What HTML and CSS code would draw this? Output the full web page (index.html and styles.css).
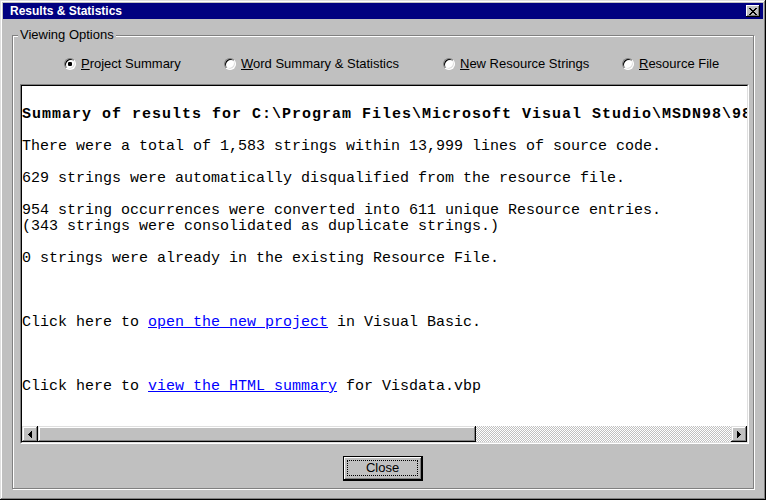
FILE: index.html
```html
<!DOCTYPE html>
<html>
<head>
<meta charset="utf-8">
<link rel="stylesheet" href="styles.css">
</head>
<body>
<div class="window">
  <div class="titlebar">
    <span class="title">Results &amp; Statistics</span>
    <span class="tbtn"><svg width="8" height="7" viewBox="0 0 8 7" shape-rendering="crispEdges"><path d="M0 0h2v1h-2zM6 0h2v1h-2zM1 1h2v1h-2zM5 1h2v1h-2zM2 2h4v1h-4zM3 3h2v1h-2zM2 4h4v1h-4zM1 5h2v1h-2zM5 5h2v1h-2zM0 6h2v1h-2zM6 6h2v1h-2z" fill="#000"/></svg></span>
  </div>
  <div class="body">
    <div class="group">
      <span class="legend">Viewing Options</span>
      <div class="radios">
        <label class="radio"><span class="circle checked"></span><span><u>P</u>roject Summary</span></label>
        <label class="radio"><span class="circle"></span><span><u>W</u>ord Summary &amp; Statistics</span></label>
        <label class="radio"><span class="circle"></span><span><u>N</u>ew Resource Strings</span></label>
        <label class="radio"><span class="circle"></span><span><u>R</u>esource File</span></label>
      </div>
      <div class="output">
        <div class="output-inner">
<pre class="text">

<b class="head">Summary of results for C:\Program Files\Microsoft Visual Studio\MSDN98\98\Samples\VB98\Visdata\Visdata.vbp</b>

There were a total of 1,583 strings within 13,999 lines of source code.

629 strings were automatically disqualified from the resource file.

954 string occurrences were converted into 611 unique Resource entries.
(343 strings were consolidated as duplicate strings.)

0 strings were already in the existing Resource File.



Click here to <a href="#" class="link">open the new project</a> in Visual Basic.



Click here to <a href="#" class="link">view the HTML summary</a> for Visdata.vbp
</pre>
          <div class="hscroll">
            <span class="sbtn"><svg width="4" height="7" viewBox="0 0 4 7" shape-rendering="crispEdges"><path d="M4 0v7L0 3.5z" fill="#000"/></svg></span>
            <span class="thumb"></span>
            <span class="track"></span>
            <span class="sbtn"><svg width="4" height="7" viewBox="0 0 4 7" shape-rendering="crispEdges"><path d="M0 0v7L4 3.5z" fill="#000"/></svg></span>
          </div>
        </div>
      </div>
      <div class="actions">
        <button class="btn"><span class="focus">Close</span></button>
      </div>
    </div>
  </div>
</div>
</body>
</html>
```

FILE: styles.css
```css
html, body {
  margin: 0;
  padding: 0;
}
body {
  width: 766px;
  height: 500px;
  background: #c0c0c0;
  overflow: hidden;
  font-family: "Liberation Sans", Arial, sans-serif;
  font-size: 13px;
  color: #000;
}
.window {
  box-sizing: border-box;
  width: 766px;
  height: 500px;
  padding: 3px;
  box-shadow: inset -1px -1px #000, inset 1px 1px #dfdfdf, inset -2px -2px #808080, inset 2px 2px #fff;
  display: flex;
  flex-direction: column;
}
.titlebar {
  height: 16px;
  background: #000080;
  color: #fff;
  display: flex;
  align-items: center;
  justify-content: space-between;
  padding: 0 3px 0 7px;
}
.title {
  font-weight: bold;
  font-size: 12px;
  line-height: 14px;
}
.tbtn {
  width: 14px;
  height: 12px;
  background: #c0c0c0;
  box-shadow: inset -1px -1px #000, inset 1px 1px #fff, inset -2px -2px #808080;
  display: flex;
  align-items: center;
  justify-content: center;
}
.body {
  padding: 16px 9px 0 9px;
}
.group {
  position: relative;
  box-sizing: border-box;
  height: 454px;
  border: 1px solid #808080;
  box-shadow: inset 1px 1px #fff, 1px 1px #fff;
  display: flex;
  flex-direction: column;
  padding: 0 4px 0 7px;
}
.legend {
  position: absolute;
  left: 5px;
  top: -9px;
  padding: 0 2px;
  line-height: 15px;
  background: #c0c0c0;
}
.radios {
  margin: 20px 0 0 44px;
  height: 16px;
  display: grid;
  grid-template-columns: 160px 219px 179px auto;
  align-items: center;
}
.radio {
  display: flex;
  align-items: center;
  gap: 5px;
  line-height: 16px;
}
.circle {
  box-sizing: border-box;
  width: 12px;
  height: 12px;
  border-radius: 50%;
  border: 1px solid;
  border-color: #808080 #fff #fff #808080;
  box-shadow: inset 1px 1px #000, inset -1px -1px #dfdfdf;
  background: #fff;
}
.circle.checked {
  background: radial-gradient(circle at 50% 50%, #000 0 2px, #fff 2.4px);
}
.output {
  margin-top: 12px;
  box-sizing: border-box;
  height: 360px;
  border: 1px solid;
  border-color: #808080 #fff #fff #808080;
}
.output-inner {
  box-sizing: border-box;
  height: 100%;
  border: 1px solid;
  border-color: #000 #dfdfdf #dfdfdf #000;
  background: #fff;
  display: flex;
  flex-direction: column;
}
.text {
  flex: 1;
  margin: 0;
  padding: 5px 0 0 0;
  overflow: hidden;
  white-space: pre;
  font-family: "Liberation Mono", "Courier New", monospace;
  font-size: 15px;
  line-height: 16px;
  color: #000;
}
.head {
  font-weight: bold;
  letter-spacing: 1px;
}
.link {
  color: #0000ff;
  text-decoration: underline;
}
.hscroll {
  height: 16px;
  display: flex;
  flex-shrink: 0;
}
.sbtn {
  box-sizing: border-box;
  width: 16px;
  height: 16px;
  background: #c0c0c0;
  box-shadow: inset -1px -1px #000, inset 1px 1px #dfdfdf, inset -2px -2px #808080, inset 2px 2px #fff;
  display: flex;
  align-items: center;
  justify-content: center;
}
.thumb {
  width: 438px;
  height: 16px;
  background: #c0c0c0;
  box-shadow: inset -1px -1px #000, inset 1px 1px #dfdfdf, inset -2px -2px #808080, inset 2px 2px #fff;
}
.track {
  flex: 1;
  background: repeating-conic-gradient(#c0c0c0 0 25%, #fff 0 50%) 0 0 / 2px 2px;
}
.actions {
  margin: 12px -4px 0 -7px;
  display: flex;
  justify-content: center;
}
.btn {
  box-sizing: border-box;
  width: 80px;
  height: 25px;
  padding: 3px 4px 4px 3px;
  border: 1px solid #000;
  background: #c0c0c0;
  box-shadow: inset -1px -1px #000, inset 1px 1px #fff, inset -2px -2px #808080;
  font-family: "Liberation Sans", Arial, sans-serif;
  font-size: 13px;
  color: #000;
  display: flex;
}
.focus {
  flex: 1;
  border: 1px dotted #000;
  display: flex;
  align-items: center;
  justify-content: center;
  line-height: 14px;
}
```
